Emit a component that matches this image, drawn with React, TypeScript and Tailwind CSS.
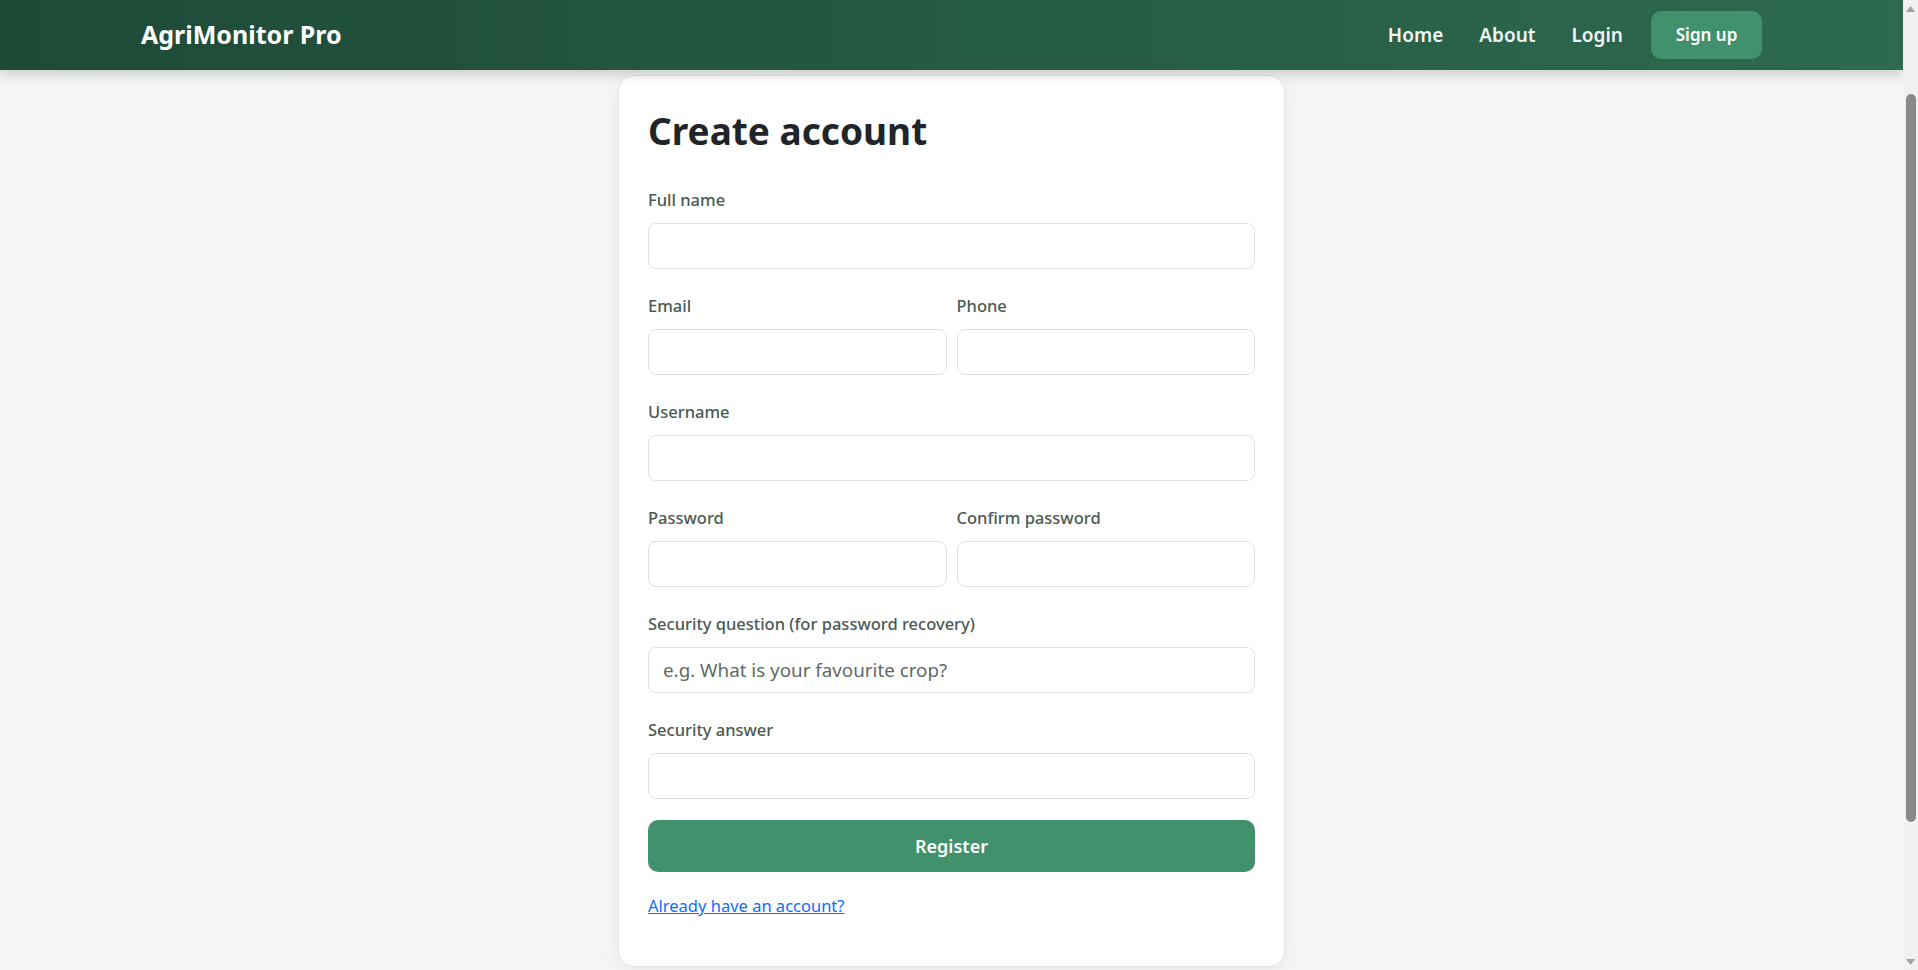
type FieldProps = {
  label: string;
  type?: string;
  placeholder?: string;
};

function Field({ label, type = 'text', placeholder }: FieldProps) {
  return (
    <div className="flex flex-col">
      <label className="mb-[11px] text-[16.5px] leading-6 font-medium text-[#4a5a53]">{label}</label>
      <input
        type={type}
        placeholder={placeholder}
        className="h-[46px] w-full rounded-lg border border-[#dee2e6] bg-white px-[14px] text-[18.8px] text-[#212529] outline-none placeholder:text-[#5f6a65]"
      />
    </div>
  );
}

// classic window scrollbar drawn at the right edge
function ScrollBar() {
  return (
    <div className="flex w-[15px] shrink-0 flex-col items-center bg-[#f1f1f1]">
      <div className="flex h-[17px] items-center justify-center">
        <svg width="9" height="6" viewBox="0 0 9 6">
          <path d="M4.5 0 9 6H0Z" fill="#a3a3a3" />
        </svg>
      </div>
      <div className="mt-[77px] h-[728px] w-[10px] rounded-full bg-[#8a8a8a]" />
      <div className="flex-1" />
      <div className="flex h-[17px] items-center justify-center">
        <svg width="9" height="6" viewBox="0 0 9 6">
          <path d="M0 0h9L4.5 6Z" fill="#a3a3a3" />
        </svg>
      </div>
    </div>
  );
}

export default function App() {
  return (
    <div className="flex h-screen overflow-hidden bg-[#f3f6f4] font-['Noto_Sans',sans-serif]">
      <div className="flex min-w-0 flex-1 flex-col overflow-hidden">
        <header className="relative z-10 h-[70px] shrink-0 bg-linear-to-r from-[#1e4a37] to-[#2d6a4f] shadow-[0_4px_12px_rgba(0,0,0,0.18)]">
          <nav className="flex h-full items-center justify-between px-[141px]">
            <a href="#" className="text-[25px] font-bold text-white">
              AgriMonitor Pro
            </a>
            <div className="flex items-center">
              <div className="flex items-center gap-[36px] text-[19px] font-semibold text-[#f1f5f3]">
                <a href="#">Home</a>
                <a href="#">About</a>
                <a href="#">Login</a>
              </div>
              <a
                href="#"
                className="ml-[28px] flex h-12 w-[111px] items-center justify-center rounded-[10px] bg-[#40916c] text-[17px] font-semibold text-white"
              >
                Sign up
              </a>
            </div>
          </nav>
        </header>

        <main className="flex justify-center pt-[5px]">
          <div className="w-[667px] rounded-2xl border border-[#e2e8e4] bg-white p-[29px] shadow-[0_4px_18px_rgba(0,0,0,0.05)]">
            <h1 className="mb-[33px] pt-[2px] text-[37px] leading-[48px] font-bold text-[#212529]">Create account</h1>

            <form className="flex flex-col" onSubmit={(e) => e.preventDefault()}>
              <div className="flex flex-col gap-[25px]">
                <Field label="Full name" />
                <div className="grid grid-cols-2 gap-[10px]">
                  <Field label="Email" type="email" />
                  <Field label="Phone" type="tel" />
                </div>
                <Field label="Username" />
                <div className="grid grid-cols-2 gap-[10px]">
                  <Field label="Password" type="password" />
                  <Field label="Confirm password" type="password" />
                </div>
                <Field label="Security question (for password recovery)" placeholder="e.g. What is your favourite crop?" />
                <Field label="Security answer" />
              </div>

              <button
                type="submit"
                className="mt-[21px] h-[52px] w-full rounded-[10px] bg-[#40916c] text-[18px] font-semibold text-white"
              >
                Register
              </button>
            </form>

            <p className="mt-5 mb-[18px] text-[16.5px] leading-[27px]">
              <a href="#" className="text-[#0d6efd] underline">
                Already have an account?
              </a>
            </p>
          </div>
        </main>
      </div>
      <ScrollBar />
    </div>
  );
}
